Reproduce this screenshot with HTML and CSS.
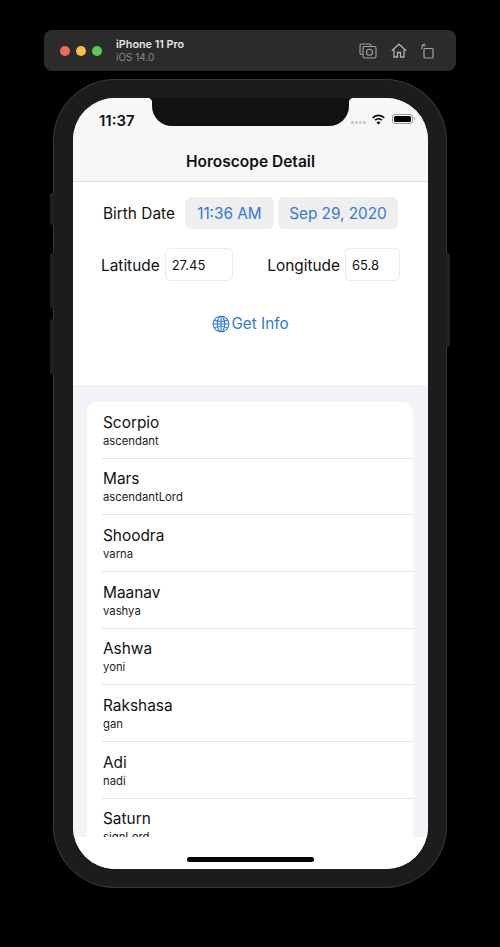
FILE: index.html
```html
<!DOCTYPE html>
<html lang="en">
<head>
    <meta charset="UTF-8">
    <meta name="viewport" content="width=device-width, initial-scale=1.0">
    <title>Horoscope Detail</title>
    <link rel="stylesheet" href="styles.css">
</head>
<body>
    <!-- Simulator toolbar -->
    <div class="toolbar">
        <div class="lights">
            <span class="light red"></span>
            <span class="light yellow"></span>
            <span class="light green"></span>
        </div>
        <div class="device-name">
            <strong>iPhone 11 Pro</strong>
            <span>iOS 14.0</span>
        </div>
        <div class="tools">
            <svg width="18" height="16" viewBox="0 0 18 16" fill="none" stroke="#a2a2a2" stroke-width="1.1">
                <path d="M3.5 11.5H2.5a1.5 1.5 0 0 1-1.5-1.5V2.5A1.5 1.5 0 0 1 2.500 1h8A1.500 1.500 0 0 1 12 2.500V3"/>
                <path d="M5 3.500h10.500A1.500 1.500 0 0 1 17 5v8.500a1.500 1.500 0 0 1-1.500 1.500H5.500A1.500 1.500 0 0 1 4 13.500V4.500z"/>
                <circle cx="10.500" cy="9.300" r="3"/>
            </svg>
            <svg width="16" height="15" viewBox="0 0 16 15" fill="none" stroke="#b0b0b0" stroke-width="1.3">
                <path d="M0.800 7.800L8 1.200l7.200 6.600"/>
                <path d="M3 6.500V14h3.500V9.500h3V14H13V6.500"/>
            </svg>
            <svg width="13" height="16" viewBox="0 0 13 16" fill="none" stroke="#a2a2a2" stroke-width="1.2">
                <rect x="3" y="5.500" width="9" height="9.500" rx="1"/>
                <path d="M1 6V3.500A1.500 1.500 0 0 1 2.500 2H5"/>
                <path d="M3.500 0.300L1.800 2l1.700 1.700" stroke-width="1"/>
            </svg>
        </div>
    </div>

    <!-- Phone -->
    <div class="device">
        <span class="side-btn mute"></span>
        <span class="side-btn vol-up"></span>
        <span class="side-btn vol-down"></span>
        <span class="side-btn power"></span>

        <div class="screen">
            <div class="notch"></div>

            <div class="nav">
                <div class="status">
                    <span class="time">11:37</span>
                    <div class="status-icons">
                        <span class="signal"><i></i><i></i><i></i><i></i></span>
                        <svg width="15" height="11" viewBox="0 0 15 11" fill="#000">
                            <path d="M7.500 2.300c2 0 3.800.8 5.200 2.100l1.100-1.200A9.200 9.200 0 0 0 7.500.600a9.200 9.200 0 0 0-6.300 2.600l1.100 1.200a7.500 7.500 0 0 1 5.200-2.100z"/>
                            <path d="M7.500 5.600c1.100 0 2.100.4 2.900 1.100l1.100-1.200a5.900 5.900 0 0 0-8 0l1.100 1.200c.8-.7 1.800-1.100 2.900-1.100z"/>
                            <path d="M7.500 10.600l2-2.100a2.900 2.900 0 0 0-4 0z"/>
                        </svg>
                        <span class="battery"><i></i></span>
                    </div>
                </div>
                <h1 class="nav-title">Horoscope Detail</h1>
            </div>

            <!-- Form Section -->
            <div class="form">
                <div class="date-row">
                    <span class="label">Birth Date</span>
                    <span class="pill pill-time">11:36 AM</span>
                    <span class="pill pill-date">Sep 29, 2020</span>
                </div>
                <div class="coord-row">
                    <div class="coord">
                        <span class="label">Latitude</span>
                        <input class="field field-lat" type="text" value="27.45">
                    </div>
                    <div class="coord">
                        <span class="label">Longitude</span>
                        <input class="field field-long" type="text" value="65.8">
                    </div>
                </div>
                <button class="get-info" type="button">
                    <svg width="18" height="18" viewBox="0 0 18 18" fill="none" stroke="#3478d8" stroke-width="1.100">
                        <circle cx="9" cy="9" r="7.800"/>
                        <ellipse cx="9" cy="9" rx="3.700" ry="7.800"/>
                        <path d="M9 1.200v15.600"/>
                        <path d="M2.300 5c1.800 1 4.100 1.500 6.700 1.500s4.900-.5 6.700-1.500"/>
                        <path d="M2.300 13c1.800-1 4.100-1.500 6.700-1.500s4.900.5 6.700 1.500"/>
                        <path d="M1.200 9h15.600"/>
                    </svg>
                    Get Info
                </button>
            </div>

            <!-- Result list -->
            <div class="list">
                <div class="card">
                    <div class="row"><div class="row-title">Scorpio</div><div class="row-sub">ascendant</div></div>
                    <div class="row"><div class="row-title">Mars</div><div class="row-sub">ascendantLord</div></div>
                    <div class="row"><div class="row-title">Shoodra</div><div class="row-sub">varna</div></div>
                    <div class="row"><div class="row-title">Maanav</div><div class="row-sub">vashya</div></div>
                    <div class="row"><div class="row-title">Ashwa</div><div class="row-sub">yoni</div></div>
                    <div class="row"><div class="row-title">Rakshasa</div><div class="row-sub">gan</div></div>
                    <div class="row"><div class="row-title">Adi</div><div class="row-sub">nadi</div></div>
                    <div class="row"><div class="row-title">Saturn</div><div class="row-sub">signLord</div></div>
                </div>
            </div>

            <div class="home-area"><span class="home-bar"></span></div>
        </div>
    </div>
</body>
</html>
```

FILE: styles.css
```css
/* Theme Colors */
:root {
    --blue: #3478d8;
    --text: #111;
    --list-bg: #f2f2f7;
    --line: #e4e4e6;
    --frame: #1c1c1c;
    --notch: #111;
}

body {
    margin: 0;
    width: 500px;
    height: 947px;
    overflow: hidden;
    background-color: #000;
    font-family: Inter, "Noto Sans", sans-serif;
    color: var(--text);
}

/* Toolbar */
.toolbar {
    display: flex;
    align-items: center;
    height: 41px;
    margin: 30px 44px 0;
    padding: 0 22px 0 16px;
    box-sizing: border-box;
    background-color: #2b2b2b;
    border-radius: 8px;
}

.lights {
    display: flex;
    gap: 6px;
}

.light {
    width: 10px;
    height: 10px;
    border-radius: 50%;
}

.red { background-color: #ec6a5e; }
.yellow { background-color: #f4bf4f; }
.green { background-color: #61c554; }

.device-name {
    display: flex;
    flex-direction: column;
    margin-left: 14px;
    font-size: 10px;
    line-height: 12px;
    color: #8a8a8a;
}

.device-name strong {
    font-size: 10.800px;
    font-weight: 600;
    color: #e4e4e4;
}

.tools {
    display: flex;
    align-items: center;
    gap: 14px;
    margin-left: auto;
}

/* Phone */
.device {
    position: relative;
    width: 394px;
    height: 809px;
    margin: 8px 0 0 53px;
    padding: 19px 19px 19px 20px;
    box-sizing: border-box;
    background-color: var(--frame);
    border-radius: 62px;
    box-shadow: inset 0 0 0 1px #363636;
}

.side-btn {
    position: absolute;
    width: 4px;
    background-color: #202020;
}

.mute { left: -3px; top: 114px; height: 32px; border-radius: 2px 0 0 2px; }
.vol-up { left: -3px; top: 174px; height: 55px; border-radius: 2px 0 0 2px; }
.vol-down { left: -3px; top: 240px; height: 55px; border-radius: 2px 0 0 2px; }
.power { right: -3px; top: 174px; height: 94px; border-radius: 0 2px 2px 0; }

.screen {
    position: relative;
    display: flex;
    flex-direction: column;
    height: 771px;
    overflow: hidden;
    background-color: #fff;
    border-radius: 42px;
}

.notch {
    position: absolute;
    top: 0;
    left: 79px;
    width: 197px;
    height: 28px;
    background-color: var(--notch);
    border-radius: 0 0 20px 20px;
}

/* small flares where the notch meets the top edge */
.notch::before,
.notch::after {
    content: "";
    position: absolute;
    top: 0;
    width: 5px;
    height: 5px;
}

.notch::before {
    left: -5px;
    background: radial-gradient(circle at 0 100%, transparent 5px, var(--notch) 5.500px);
}

.notch::after {
    right: -5px;
    background: radial-gradient(circle at 100% 100%, transparent 5px, var(--notch) 5.500px);
}

/* Nav bar */
.nav {
    height: 84px;
    box-sizing: border-box;
    background-color: #f7f7f7;
    border-bottom: 1px solid #dedede;
}

.status {
    display: flex;
    justify-content: space-between;
    align-items: center;
    height: 44px;
    padding: 0 14px 0 26px;
}

.time {
    font-size: 15px;
    font-weight: 600;
}

.status-icons {
    display: flex;
    align-items: center;
    gap: 5px;
    margin-top: -2px;
}

.signal {
    display: flex;
    gap: 1px;
    margin-top: 7px;
}

.signal i {
    width: 3px;
    height: 3px;
    border-radius: 50%;
    background-color: #c4c4c4;
}

.battery {
    position: relative;
    display: block;
    width: 21px;
    height: 10px;
    padding: 1px;
    box-sizing: border-box;
    margin: 0 1px 0 1px;
    border: 1px solid #999;
    border-radius: 3px;
}

.battery::after {
    content: "";
    position: absolute;
    top: 1.500px;
    right: -3px;
    width: 1.500px;
    height: 3px;
    background-color: #999;
    border-radius: 0 1px 1px 0;
}

.battery i {
    display: block;
    height: 100%;
    background-color: #000;
    border-radius: 1.500px;
}

.nav-title {
    margin: 7px 0 0;
    font-size: 15.500px;
    line-height: 26px;
    font-weight: 600;
    text-align: center;
}

/* Form */
.form {
    height: 203px;
    padding-top: 15px;
    box-sizing: border-box;
    background-color: #fff;
}

.label {
    font-size: 15.400px;
}

.date-row {
    display: flex;
    align-items: center;
    height: 32px;
    padding-left: 30px;
}

.pill {
    display: flex;
    align-items: center;
    justify-content: center;
    height: 32px;
    background-color: #efeff0;
    border-radius: 6px;
    font-size: 15.300px;
    color: var(--blue);
}

.pill-time {
    width: 89px;
    margin-left: 10px;
}

.pill-date {
    width: 120px;
    margin-left: 4px;
}

.coord-row {
    display: flex;
    justify-content: space-between;
    padding: 0 28px;
    margin-top: 19px;
}

.coord {
    display: flex;
    align-items: center;
    gap: 5px;
}

.coord .label {
    margin-top: 2px;
}

.field {
    height: 33px;
    padding: 0 6px;
    box-sizing: border-box;
    border: 1px solid #ececec;
    border-radius: 5px;
    font-family: inherit;
    font-size: 13px;
    color: var(--text);
    background-color: #fff;
    outline: none;
}

.field-lat { width: 68px; }
.field-long { width: 55px; }

.get-info {
    display: flex;
    align-items: center;
    justify-content: center;
    width: 100%;
    margin-top: 30px;
    padding: 0;
    border: none;
    background: none;
    font-family: inherit;
    font-size: 15.300px;
    line-height: 26px;
    color: var(--blue);
}

.get-info svg {
    margin-right: 1px;
}

/* List */
.list {
    flex: 1;
    min-height: 0;
    overflow: hidden;
    padding: 17px 15px 0 14px;
    background-color: var(--list-bg);
}

.card {
    background-color: #fff;
    border-radius: 10px 10px 0 0;
}

.row {
    display: flex;
    flex-direction: column;
    justify-content: center;
    height: 56.670px;
    margin-left: 15px;
    padding: 1px 0 0 1px;
    box-sizing: border-box;
    border-bottom: 1px solid var(--line);
}

.row-title {
    font-size: 15.400px;
    line-height: 21px;
}

.row-sub {
    font-size: 11.300px;
    line-height: 15px;
    margin-top: 1px;
    color: #222;
}

/* Home indicator */
.home-area {
    display: flex;
    justify-content: center;
    height: 32px;
    padding-top: 20px;
    box-sizing: border-box;
    background-color: #fff;
}

.home-bar {
    width: 127px;
    height: 5px;
    background-color: #000;
    border-radius: 3px;
}
```
